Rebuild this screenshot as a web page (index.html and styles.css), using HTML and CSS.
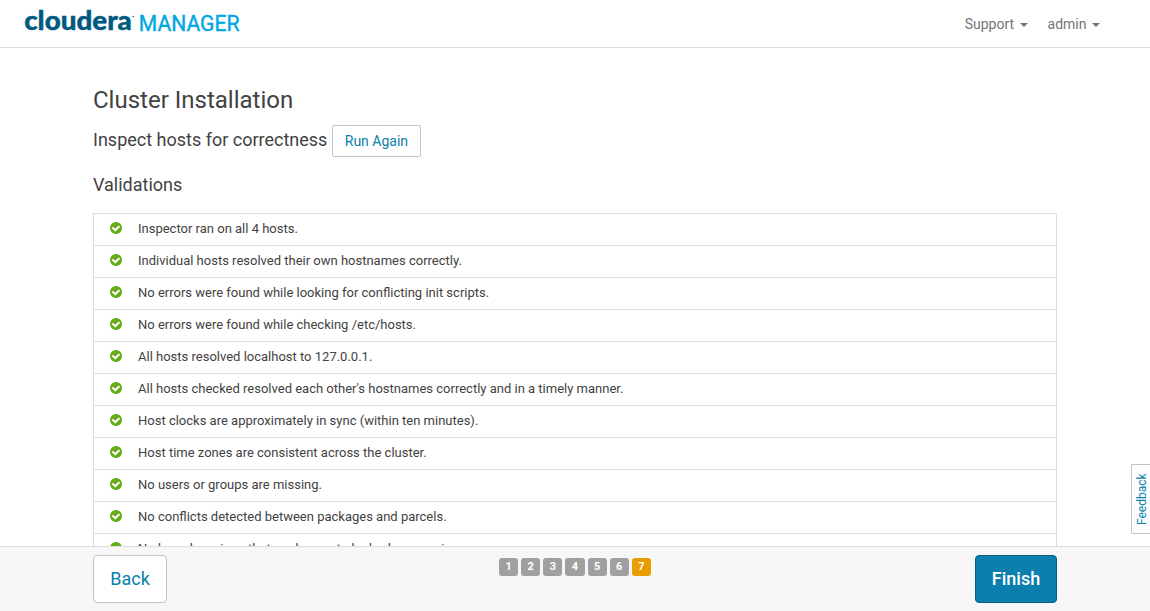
FILE: index.html
```html
<!DOCTYPE html>
<html lang="en">
<head>
<meta charset="utf-8">
<title>Cluster Installation - Cloudera Manager</title>
<link rel="stylesheet" href="styles.css">
</head>
<body>
<svg class="defs" aria-hidden="true">
  <symbol id="check" viewBox="128 128 1536 1536"><path d="M1412 734q0-28-18-46l-91-90q-19-19-45-19t-45 19l-408 407-226-226q-19-19-45-19t-45 19l-91 90q-18 18-18 46 0 27 18 45l362 362q19 19 45 19 27 0 46-19l543-543q18-18 18-45zm252 162q0 209-103 385.5t-279.5 279.5-385.5 103-385.5-103-279.5-279.5-103-385.5 103-385.5 279.5-279.5 385.5-103 385.5 103 279.5 279.5 103 385.5z"/></symbol>
</svg>
<header class="navbar">
  <svg class="logo" width="240" height="47" viewBox="0 0 240 47">
    <text class="logo-brand" x="4.2" y="30.3" textLength="107.5" lengthAdjust="spacingAndGlyphs">cloudera</text>
    <circle class="logo-mark" cx="113.3" cy="16.5" r="0.8"/>
    <text class="logo-product" x="118.8" y="30.7" textLength="100.6" lengthAdjust="spacingAndGlyphs">MANAGER</text>
  </svg>
  <nav class="menu">
    <a class="menu-item">Support<span class="caret"></span></a>
    <a class="menu-item">admin<span class="caret"></span></a>
  </nav>
</header>
<main class="content">
  <h1 class="title">Cluster Installation</h1>
  <div class="inspect">
    <h2 class="subtitle">Inspect hosts for correctness</h2>
    <button class="btn btn-run">Run Again</button>
  </div>
  <h3 class="section">Validations</h3>
  <ul class="checks">
    <li class="check"><svg class="icon"><use href="#check"/></svg>Inspector ran on all 4 hosts.</li>
    <li class="check"><svg class="icon"><use href="#check"/></svg>Individual hosts resolved their own hostnames correctly.</li>
    <li class="check"><svg class="icon"><use href="#check"/></svg>No errors were found while looking for conflicting init scripts.</li>
    <li class="check"><svg class="icon"><use href="#check"/></svg>No errors were found while checking /etc/hosts.</li>
    <li class="check"><svg class="icon"><use href="#check"/></svg>All hosts resolved localhost to 127.0.0.1.</li>
    <li class="check"><svg class="icon"><use href="#check"/></svg>All hosts checked resolved each other's hostnames correctly and in a timely manner.</li>
    <li class="check"><svg class="icon"><use href="#check"/></svg>Host clocks are approximately in sync (within ten minutes).</li>
    <li class="check"><svg class="icon"><use href="#check"/></svg>Host time zones are consistent across the cluster.</li>
    <li class="check"><svg class="icon"><use href="#check"/></svg>No users or groups are missing.</li>
    <li class="check"><svg class="icon"><use href="#check"/></svg>No conflicts detected between packages and parcels.</li>
    <li class="check"><svg class="icon"><use href="#check"/></svg>No kernel versions that are known to be bad are running.</li>
  </ul>
</main>
<footer class="footer">
  <button class="btn btn-large btn-back">Back</button>
  <div class="steps">
    <span class="step">1</span><span class="step">2</span><span class="step">3</span><span class="step">4</span><span class="step">5</span><span class="step">6</span><span class="step step-current">7</span>
  </div>
  <button class="btn btn-large btn-finish">Finish</button>
</footer>
<a class="feedback">Feedback</a>
</body>
</html>
```

FILE: styles.css
```css
* { box-sizing: border-box; }
body {
  margin: 0;
  height: 611px;
  display: flex;
  flex-direction: column;
  overflow: hidden;
  background: #fff;
  color: #424242;
  font: 13px/20px Roboto, sans-serif;
}
.defs { position: absolute; width: 0; height: 0; }
.navbar {
  flex: none;
  height: 48px;
  padding: 0 50px 0 20px;
  display: flex;
  justify-content: space-between;
  border-bottom: 1px solid #dcdcdc;
}
.logo { display: block; }
.logo-brand { font: 900 26px Lato, sans-serif; fill: #00597f; stroke: #00597f; stroke-width: 0.4px; }
.logo-mark { fill: #00597f; }
.logo-product { font: 400 22px Roboto, sans-serif; fill: #00a7e1; stroke: #00a7e1; stroke-width: 0.4px; }
.menu { display: flex; gap: 20px; align-items: center; }
.menu-item { display: flex; align-items: center; font-size: 14px; color: #757575; }
.caret {
  margin: 2px 0 0 5.5px;
  border: 4px solid transparent;
  border-top-color: currentColor;
  border-bottom: 0;
}
.content {
  flex: 1;
  min-height: 0;
  overflow: hidden;
  padding: 37px 93px 0;
}
.title { margin: 0; font-size: 24px; line-height: 30px; font-weight: 400; }
.inspect { display: flex; gap: 5px; margin-top: 10px; }
.subtitle, .section { margin: 0; font-size: 18px; line-height: 30px; font-weight: 400; }
.section { margin-top: 13px; }
.btn {
  font-family: inherit;
  border: 1px solid #c4c4c4;
  border-radius: 2px;
  background: #fff;
  color: #0b7fad;
  padding: 0;
}
.btn-run { width: 89px; height: 32px; padding-right: 1px; font-size: 14px; }
.checks {
  list-style: none;
  margin: 13px 0 0;
  padding: 0;
  border: 1px solid #dcdcdc;
}
.check { height: 32px; padding: 5px 16px; display: flex; border-bottom: 1px solid #dcdcdc; }
.icon { width: 12px; height: 12px; margin: 3px 16px 0 0; fill: #67ad15; }
.footer {
  flex: none;
  height: 65px;
  padding: 8px 93px 0;
  display: flex;
  justify-content: space-between;
  align-items: flex-start;
  background: #f7f7f7;
  border-top: 1px solid #dcdcdc;
}
.btn-large { height: 48px; padding-bottom: 2px; font-size: 18px; border-radius: 4px; }
.btn-back { width: 74px; }
.btn-finish { width: 82px; font-weight: 500; color: #fff; background: #0b7fad; border-color: #08607f; }
.steps { display: flex; gap: 3px; margin: 3px 0 0 8px; }
.step {
  width: 19.15px;
  height: 18px;
  border-radius: 3px;
  background: #a0a0a0;
  color: #fff;
  font-size: 11px;
  font-weight: 700;
  line-height: 17px;
  text-align: center;
}
.step-current { background: #e89e00; }
/* Rotated half a turn so the label reads upwards; sides are mirrored. */
.feedback {
  position: absolute;
  right: 0;
  top: 464px;
  width: 19px;
  height: 70px;
  border: 1px solid #c4c4c4;
  border-left: 0;
  border-radius: 0 2px 2px 0;
  background: #fff;
  color: #0b7fad;
  font-size: 12px;
  line-height: 16px;
  text-align: center;
  writing-mode: vertical-rl;
  transform: rotate(180deg);
  padding-right: 2px;
}
```
